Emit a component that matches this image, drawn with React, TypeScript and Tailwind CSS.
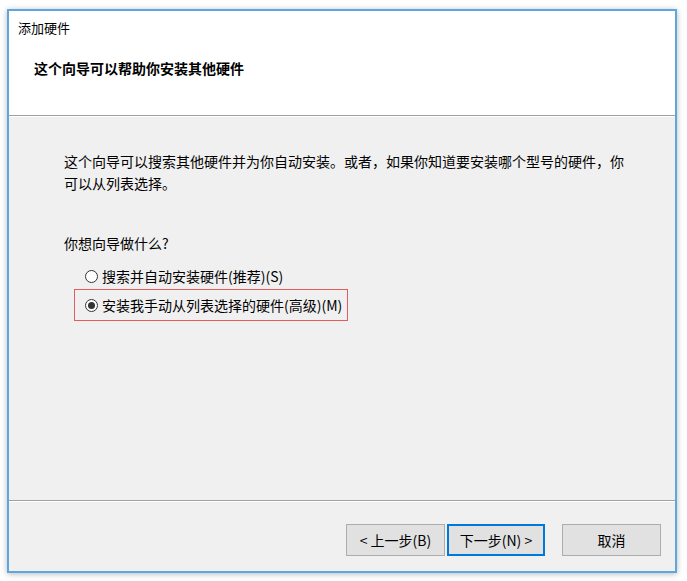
import React from "react";

const font = { fontFamily: "'Noto Sans CJK SC', 'Noto Sans', sans-serif" };

function Radio({ checked }: { checked?: boolean }) {
  return (
    <span className="w-[13px] h-[13px] rounded-full border border-[#333333] bg-white flex items-center justify-center shrink-0">
      {checked && <span className="w-[7px] h-[7px] rounded-full bg-[#333333]" />}
    </span>
  );
}

export default function App() {
  return (
    <div className="w-[687px] h-[581px] bg-white pt-[9px] pl-[7px]" style={font}>
      <div className="w-[670px] h-[564px] border-2 border-[#5fa5de] bg-[#f0f0f0] flex flex-col shadow-[0_1px_6px_rgba(0,0,0,0.28)] text-black">
        {/* header */}
        <div className="h-[105px] bg-white border-b border-[#a0a0a0] flex flex-col shrink-0">
          <div className="pl-[9px] pt-[8px] text-[13px] leading-[18px]">添加硬件</div>
          <div className="pl-[25px] mt-[21px] text-[14px] leading-[20px] font-bold">这个向导可以帮助你安装其他硬件</div>
        </div>
        <div className="h-px bg-white shrink-0" />
        {/* body */}
        <div className="flex-1 pl-[55px] pt-[33px] flex flex-col">
          <div className="text-[14px] leading-[22px] w-[570px]">
            这个向导可以搜索其他硬件并为你自动安装。或者，如果你知道要安装哪个型号的硬件，你
            <br />
            可以从列表选择。
          </div>
          <div className="text-[14px] leading-[22px] mt-[38px]">你想向导做什么?</div>
          <div className="mt-[11px] ml-[21px] flex items-center gap-[4px] text-[14px] leading-[22px]">
            <Radio />
            <span>搜索并自动安装硬件(推荐)(S)</span>
          </div>
          <div className="mt-[2px] ml-[10px] w-[274px] h-[32px] border border-[#e45c5c] flex items-center pl-[10px] gap-[4px] text-[14px] leading-[22px]">
            <Radio checked />
            <span>安装我手动从列表选择的硬件(高级)(M)</span>
          </div>
        </div>
        {/* footer */}
        <div className="h-[71px] border-t border-[#a0a0a0] shrink-0 flex flex-col">
          <div className="h-px bg-white" />
          <div className="flex justify-end pr-[14px] pt-[22px]">
            <button className="w-[99px] h-[32px] bg-[#e1e1e1] border border-[#adadad] text-[14px] leading-[20px]">
              &lt; 上一步(B)
            </button>
            <button className="ml-[2px] w-[98px] h-[32px] bg-[#e1e1e1] border-2 border-[#0078d7] text-[14px] leading-[20px]">
              下一步(N) &gt;
            </button>
            <button className="ml-[17px] w-[99px] h-[32px] bg-[#e1e1e1] border border-[#adadad] text-[14px] leading-[20px]">
              取消
            </button>
          </div>
        </div>
      </div>
    </div>
  );
}
